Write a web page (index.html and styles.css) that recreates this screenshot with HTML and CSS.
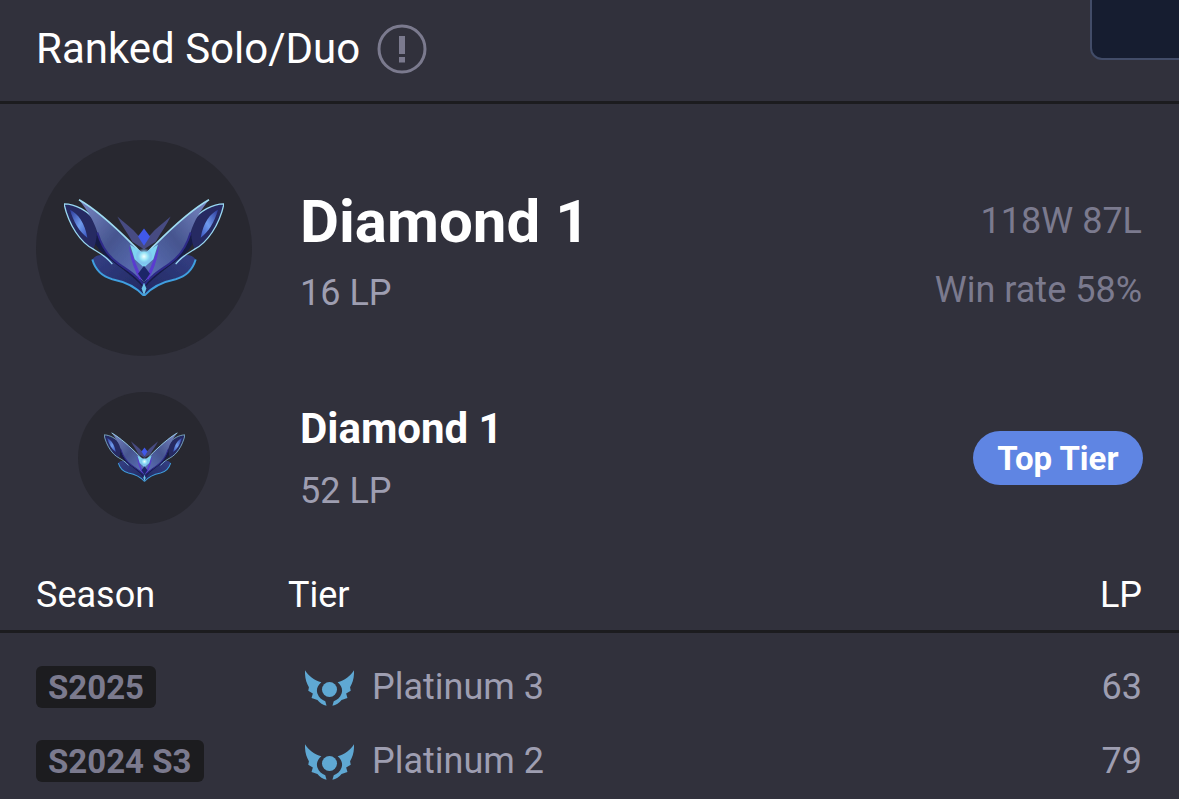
FILE: index.html
```html
<!DOCTYPE html>
<html lang="en">
<head>
<meta charset="utf-8">
<title>Ranked Solo/Duo</title>
<link rel="stylesheet" href="styles.css">
</head>
<body>
<svg class="defs" width="0" height="0" aria-hidden="true">
  <defs>
    <filter id="soft" x="-5%" y="-5%" width="110%" height="110%"><feGaussianBlur stdDeviation="2"/></filter>
    <linearGradient id="wing" x1="0" y1="0" x2="1" y2="1">
      <stop offset="0" stop-color="#7a88c4"/><stop offset=".5" stop-color="#46558f"/><stop offset="1" stop-color="#5f74bd"/>
    </linearGradient>
    <linearGradient id="outer" x1="0" y1="0" x2="1" y2="1">
      <stop offset="0" stop-color="#2c3a9a"/><stop offset=".55" stop-color="#6f9aec"/><stop offset="1" stop-color="#3a55c0"/>
    </linearGradient>
    <linearGradient id="low" x1="0" y1="0" x2="1" y2="1">
      <stop offset="0" stop-color="#333f84"/><stop offset="1" stop-color="#222860"/>
    </linearGradient>
    <radialGradient id="glow" cx=".5" cy=".5" r=".5">
      <stop offset="0" stop-color="#f0ffff"/><stop offset=".5" stop-color="#8fe0f5"/><stop offset="1" stop-color="#7a8fe0" stop-opacity="0"/>
    </radialGradient>
    <g id="half">
      <path d="M85 181C100 160 130 165 160 185L240 220L240 290C215 262 180 245 145 238C115 230 95 210 85 181Z" fill="url(#low)"/>
      <path d="M85 181C95 215 115 232 145 240C185 248 218 265 240 290" fill="none" stroke="#3f9fe0" stroke-width="6"/>
      <path d="M70 40C75 90 85 130 112 158C150 195 205 225 240 268L240 215L160 120Z" fill="#171b46"/>
      <path d="M0 14C35 14 72 36 92 62C102 90 100 125 88 150C50 130 15 80 0 14Z" fill="#252a62"/>
      <path d="M18 32C42 44 62 70 70 116C46 98 28 68 18 32Z" fill="url(#outer)"/>
      <path d="M0 14C35 14 72 36 92 62M0 14C15 80 50 130 88 150C105 160 125 170 145 195" fill="none" stroke="#9ad9f2" stroke-width="4"/>
      <path d="M45 2C95 30 155 85 205 135C222 150 234 165 240 178L240 250C222 232 195 215 165 195C132 172 112 140 100 100C90 65 70 35 45 2Z" fill="url(#wing)"/>
      <path d="M45 2C95 30 155 85 205 135C222 150 234 165 240 178" fill="none" stroke="#9fdcf2" stroke-width="5"/>
      <path d="M100 100C112 140 132 172 165 195C195 215 222 232 240 258" fill="none" stroke="#2d2a88" stroke-width="6"/>
      <path d="M160 52C182 72 205 88 222 108L240 125L240 150L205 128C190 100 172 78 160 52Z" fill="#474b82"/>
      <path d="M195 140C205 165 215 195 236 240L226 240C210 210 198 175 195 140Z" fill="#5a3bd0"/>
    </g>
    <symbol id="diamond" viewBox="0 0 480 290">
      <g filter="url(#soft)">
        <use href="#half"/>
        <use href="#half" transform="translate(480 0) scale(-1 1)"/>
        <path d="M240 88L258 112L240 140L222 112Z" fill="#3f58ea"/>
        <path d="M198 136L240 162L282 136L268 180L240 205L212 180Z" fill="#7ed4f2"/>
        <ellipse cx="240" cy="172" rx="26" ry="26" fill="url(#glow)"/>
        <path d="M240 200L258 224L240 250L222 224Z" fill="#1f2768"/>
        <path d="M240 250L247 268L240 290L233 268Z" fill="#6cc3e8"/>
      </g>
    </symbol>
    <path id="platHalf" d="M0 3C10 20 30 35 50 40C38 50 34 62 38 74C42 86 52 94 62 98L66 112C55 110 45 102 38 94L20 88L24 74L10 66L12 55C4 42 -1 25 0 3Z"/>
    <symbol id="platinum" viewBox="0 0 150 112">
      <g fill="#5fa8d3">
        <use href="#platHalf"/>
        <use href="#platHalf" transform="translate(150 0) scale(-1 1)"/>
        <circle cx="75" cy="62" r="23"/>
      </g>
    </symbol>
  </defs>
</svg>
<main class="panel">
  <header class="head">
    <h1 class="title">Ranked Solo/Duo</h1>
    <svg class="info" viewBox="0 0 50 50" aria-hidden="true">
      <circle cx="25" cy="25" r="23" fill="none" stroke="#7b7a8e" stroke-width="3"/>
      <rect x="22" y="12" width="6" height="18" fill="#7b7a8e"/>
      <rect x="22" y="33" width="6" height="5.500" fill="#7b7a8e"/>
    </svg>
    <div class="corner"></div>
  </header>

  <section class="rank rank-big">
    <div class="medal medal-big"><svg class="emblem-big"><use href="#diamond"/></svg></div>
    <div class="rank-text">
      <div class="tier-big">Diamond 1</div>
      <div class="lp">16 LP</div>
    </div>
    <div class="stats">
      <div>118W 87L</div>
      <div>Win rate 58%</div>
    </div>
  </section>

  <section class="rank rank-small">
    <div class="medal-slot">
      <div class="medal medal-small"><svg class="emblem-small"><use href="#diamond"/></svg></div>
    </div>
    <div class="rank-text">
      <div class="tier-small">Diamond 1</div>
      <div class="lp">52 LP</div>
    </div>
    <span class="badge">Top Tier</span>
  </section>

  <section class="table">
    <div class="row row-head">
      <div>Season</div><div>Tier</div><div class="num">LP</div>
    </div>
    <div class="row row-body first">
      <div><span class="season">S2025</span></div>
      <div class="tier"><svg class="plat"><use href="#platinum"/></svg>Platinum 3</div>
      <div class="num">63</div>
    </div>
    <div class="row row-body">
      <div><span class="season">S2024 S3</span></div>
      <div class="tier"><svg class="plat"><use href="#platinum"/></svg>Platinum 2</div>
      <div class="num">79</div>
    </div>
  </section>
</main>
</body>
</html>
```
FILE: styles.css
```css
* { box-sizing: border-box; }
html, body { margin: 0; height: 100%; overflow: hidden; background: #31313c; }
body { font-family: Roboto, "Liberation Sans", sans-serif; color: #fff; }
.defs { position: absolute; }
.panel { width: 1179px; height: 799px; overflow: hidden; }

.head {
  position: relative;
  display: flex;
  align-items: center;
  gap: 18px;
  height: 104px;
  padding: 0 36px 4px;
  border-bottom: 3px solid #1c1c1f;
}
.title { margin: 0; font-size: 42px; font-weight: 400; line-height: 48px; color: #fff; }
.info { width: 50px; height: 50px; margin-left: -1px; }
.corner {
  position: absolute;
  top: -2px;
  right: -4px;
  width: 93px;
  height: 62px;
  background: #161d30;
  border: 2px solid #424c68;
  border-bottom-left-radius: 12px;
}

.rank { display: flex; align-items: center; padding: 0 37px 0 36px; }
.rank-big { height: 216px; margin-top: 36px; }
.rank-small { height: 132px; margin-top: 36px; }
.medal { flex: none; display: flex; align-items: center; justify-content: center; border-radius: 50%; background: #282830; }
.medal-big { width: 216px; height: 216px; margin-right: 48px; }
.medal-small { width: 132px; height: 132px; }
.medal-slot { flex: none; width: 216px; margin-right: 48px; display: flex; justify-content: center; }
.emblem-big { width: 160px; height: 97px; margin-top: -2px; }
.emblem-small { width: 81px; height: 50px; margin-top: -2px; }

.rank-text { flex: 1; }
.tier-big { font-size: 60px; font-weight: 700; line-height: 66px; margin-top: 5px; }
.tier-small { font-size: 42px; font-weight: 700; line-height: 44px; margin-top: 2px; }
.lp { font-size: 36px; line-height: 40px; color: #9e9eb1; }
.rank-big .lp { margin-top: 18px; }
.rank-small .lp { margin-top: 20px; }

.stats { text-align: right; font-size: 36px; line-height: 40px; color: #7b7a8e; display: flex; flex-direction: column; gap: 29px; margin-top: 14px; }
.badge {
  display: block;
  height: 54px;
  padding: 0 24.500px;
  border-radius: 27px;
  background: #5f85e3;
  font-size: 33px;
  font-weight: 700;
  line-height: 55px;
  color: #fff;
  margin-right: -1px;
}

.table { margin-top: 40px; }
.row { display: grid; grid-template-columns: 252px 1fr auto; align-items: center; padding: 0 37px 0 36px; }
.row-head { height: 69px; padding-bottom: 5px; border-bottom: 3px solid #1c1c1f; font-size: 36px; color: #fff; }
.row-body { height: 74px; font-size: 36px; color: #9e9eb1; }
.row-body.first { margin-top: 17px; }
.num { text-align: right; }
.season {
  display: inline-block;
  height: 42px;
  padding: 0 12px;
  border-radius: 6px;
  background: #1c1c1f;
  font-size: 33px;
  font-weight: 700;
  line-height: 44px;
  color: #7b7a8e;
}
.tier { display: flex; align-items: center; gap: 18px; margin-left: 17px; }
.plat { width: 49px; height: 37px; }
```
